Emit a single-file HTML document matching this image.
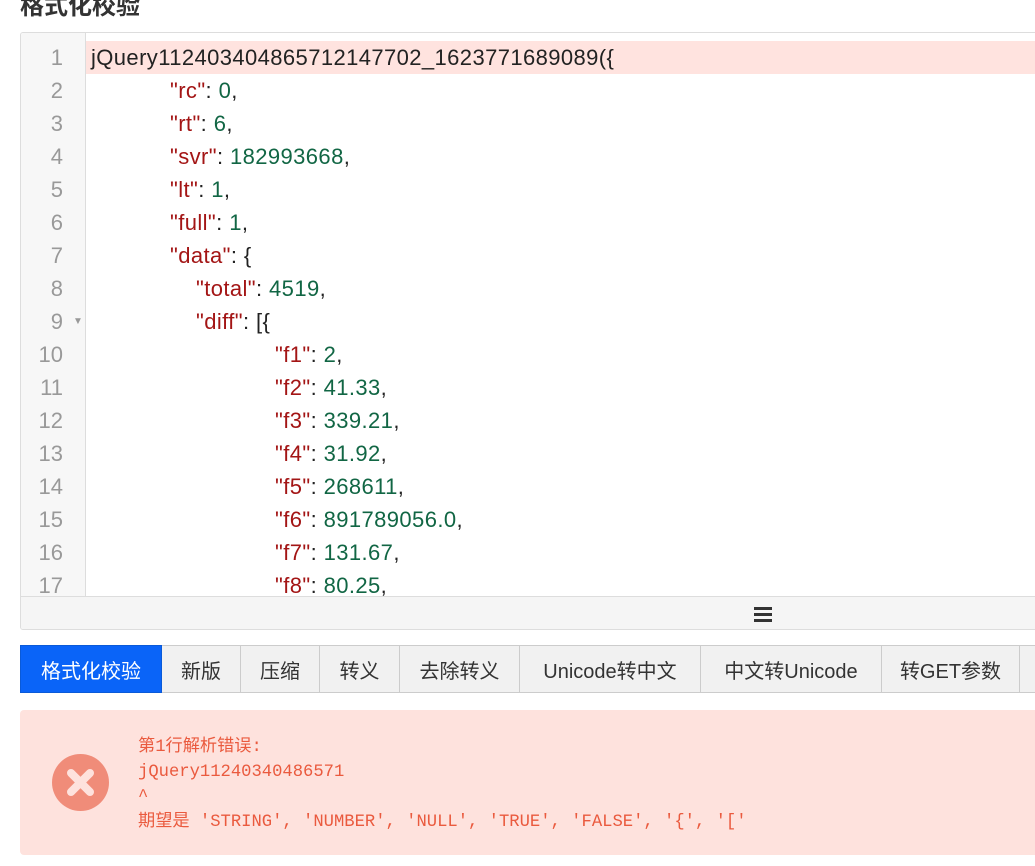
<!DOCTYPE html>
<html><head><meta charset="utf-8"><style>
body{margin:0;width:1035px;height:866px;overflow:hidden;background:#fff;font-family:"Liberation Sans","Noto Sans CJK SC",sans-serif;position:relative}
.t{position:absolute;left:20px;top:-14px;font-size:24px;font-weight:bold;color:#333}
.ed{position:absolute;left:20px;top:32px;width:1030px;height:596px;border:1px solid #ddd;border-radius:3px;overflow:hidden}
.gut{position:absolute;left:0;top:0;width:64px;height:563px;background:#f7f7f7;border-right:1px solid #ddd}
.hl{position:absolute;left:65px;top:8px;right:0;height:33px;background:#ffe3df}
.ln{position:absolute;left:0;width:42px;text-align:right;font-size:22px;color:#999;line-height:33px}
.cd{position:absolute;font-size:22px;line-height:33px;color:#222;white-space:pre;letter-spacing:0.4px}
.k{color:#a31515}.n{color:#116644}
.bar{position:absolute;left:0;top:563px;right:0;height:33px;background:#f5f5f5;border-top:1px solid #ddd}
.btns{position:absolute;left:20px;top:645px;height:48px;display:flex}
.b{height:46px;border:1px solid #ccc;border-left:none;background:#f1f1f1;font-size:20px;color:#333;display:flex;align-items:center;justify-content:center;box-sizing:content-box}
.b.a{background:#0a64f8;color:#fff;border:1px solid #0a5ad8}
.err{position:absolute;left:20px;top:710px;width:1030px;height:145px;background:#fee2dd;border-radius:4px}
.em{position:absolute;left:118px;top:25px;font-family:"Liberation Mono","Noto Sans CJK SC",monospace;font-size:17.2px;line-height:25px;color:#ea5a3e;white-space:pre}
</style></head><body>
<div class="t">格式化校验</div>
<div class="ed">
<div class="gut"></div><div class="hl"></div>
<div class="ln" style="top:8px">1</div><div class="ln" style="top:41px">2</div><div class="ln" style="top:74px">3</div><div class="ln" style="top:107px">4</div><div class="ln" style="top:140px">5</div><div class="ln" style="top:173px">6</div><div class="ln" style="top:206px">7</div><div class="ln" style="top:239px">8</div><div class="ln" style="top:272px">9</div><div class="ln" style="top:305px">10</div><div class="ln" style="top:338px">11</div><div class="ln" style="top:371px">12</div><div class="ln" style="top:404px">13</div><div class="ln" style="top:437px">14</div><div class="ln" style="top:470px">15</div><div class="ln" style="top:503px">16</div><div class="ln" style="top:536px">17</div>
<div style="position:absolute;left:52px;top:283px;font-size:10px;color:#999">▼</div>
<div class="cd" style="left:70px;top:8px">jQuery112403404865712147702_1623771689089({</div>
<div class="cd" style="left:149px;top:41px"><span class="k">"rc"</span>: <span class="n">0</span>,</div>
<div class="cd" style="left:149px;top:74px"><span class="k">"rt"</span>: <span class="n">6</span>,</div>
<div class="cd" style="left:149px;top:107px"><span class="k">"svr"</span>: <span class="n">182993668</span>,</div>
<div class="cd" style="left:149px;top:140px"><span class="k">"lt"</span>: <span class="n">1</span>,</div>
<div class="cd" style="left:149px;top:173px"><span class="k">"full"</span>: <span class="n">1</span>,</div>
<div class="cd" style="left:149px;top:206px"><span class="k">"data"</span>: {</div>
<div class="cd" style="left:175px;top:239px"><span class="k">"total"</span>: <span class="n">4519</span>,</div>
<div class="cd" style="left:175px;top:272px"><span class="k">"diff"</span>: [{</div>
<div class="cd" style="left:254px;top:305px"><span class="k">"f1"</span>: <span class="n">2</span>,</div>
<div class="cd" style="left:254px;top:338px"><span class="k">"f2"</span>: <span class="n">41.33</span>,</div>
<div class="cd" style="left:254px;top:371px"><span class="k">"f3"</span>: <span class="n">339.21</span>,</div>
<div class="cd" style="left:254px;top:404px"><span class="k">"f4"</span>: <span class="n">31.92</span>,</div>
<div class="cd" style="left:254px;top:437px"><span class="k">"f5"</span>: <span class="n">268611</span>,</div>
<div class="cd" style="left:254px;top:470px"><span class="k">"f6"</span>: <span class="n">891789056.0</span>,</div>
<div class="cd" style="left:254px;top:503px"><span class="k">"f7"</span>: <span class="n">131.67</span>,</div>
<div class="cd" style="left:254px;top:536px"><span class="k">"f8"</span>: <span class="n">80.25</span>,</div>
<div class="bar"><div style="position:absolute;left:733px;top:10px;width:18px;height:3px;background:#333;box-shadow:0 6px 0 #333,0 12px 0 #333"></div></div>
</div>
<div class="btns">
<div class="b a" style="width:140px">格式化校验</div>
<div class="b" style="width:78px">新版</div>
<div class="b" style="width:78px">压缩</div>
<div class="b" style="width:79px">转义</div>
<div class="b" style="width:119px">去除转义</div>
<div class="b" style="width:180px">Unicode转中文</div>
<div class="b" style="width:180px">中文转Unicode</div>
<div class="b" style="width:137px">转GET参数</div>
<div class="b" style="width:40px"></div>
</div>
<div class="err">
<svg style="position:absolute;left:32px;top:44px" width="57" height="57" viewBox="0 0 57 57"><circle cx="28.5" cy="28.5" r="28.5" fill="#f08c79"/><path d="M19 19L38 38M38 19L19 38" stroke="#fee2dd" stroke-width="8" stroke-linecap="round"/></svg>
<div class="em">第1行解析错误:
jQuery11240340486571
^
期望是 'STRING', 'NUMBER', 'NULL', 'TRUE', 'FALSE', '{', '['</div>
</div>
</body></html>
